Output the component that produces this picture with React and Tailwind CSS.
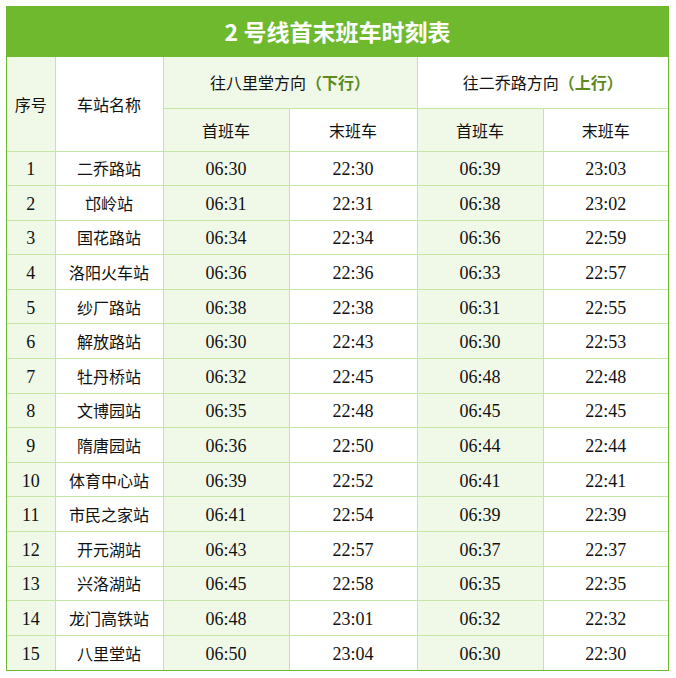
const rows = [
  ['1', '二乔路站', '06:30', '22:30', '06:39', '23:03'],
  ['2', '邙岭站', '06:31', '22:31', '06:38', '23:02'],
  ['3', '国花路站', '06:34', '22:34', '06:36', '22:59'],
  ['4', '洛阳火车站', '06:36', '22:36', '06:33', '22:57'],
  ['5', '纱厂路站', '06:38', '22:38', '06:31', '22:55'],
  ['6', '解放路站', '06:30', '22:43', '06:30', '22:53'],
  ['7', '牡丹桥站', '06:32', '22:45', '06:48', '22:48'],
  ['8', '文博园站', '06:35', '22:48', '06:45', '22:45'],
  ['9', '隋唐园站', '06:36', '22:50', '06:44', '22:44'],
  ['10', '体育中心站', '06:39', '22:52', '06:41', '22:41'],
  ['11', '市民之家站', '06:41', '22:54', '06:39', '22:39'],
  ['12', '开元湖站', '06:43', '22:57', '06:37', '22:37'],
  ['13', '兴洛湖站', '06:45', '22:58', '06:35', '22:35'],
  ['14', '龙门高铁站', '06:48', '23:01', '06:32', '22:32'],
  ['15', '八里堂站', '06:50', '23:04', '06:30', '22:30'],
];

const cjk = "font-['Noto_Sans_CJK_SC',sans-serif] text-[16px]";
const serif = "font-['Liberation_Serif','Noto_Sans_CJK_SC',serif] text-[18px] pt-[3px]";
const cell = 'border border-[#c3e6a4] text-center align-middle p-0';
const shade = 'bg-[#f0f8e8]';

export default function App() {
  return (
    <div className="bg-white w-[676px] h-[678px] pt-[6px] pl-[6px]">
      <div className="w-[663px] border-l border-r border-b border-[#6db82d]">
        <div className={`h-[51px] bg-[#6fb92e] text-white text-[23px] font-bold flex items-center justify-center font-['Noto_Sans_CJK_SC',sans-serif]`}>
          2 号线首末班车时刻表
        </div>
        <table className="table-fixed border-collapse w-[661px] text-[#111]">
          <colgroup>
            <col className="w-[48px]" />
            <col className="w-[108px]" />
            <col className="w-[126px]" />
            <col className="w-[128px]" />
            <col className="w-[126px]" />
            <col className="w-[125px]" />
          </colgroup>
          <thead>
            <tr className="h-[51px]">
              <td rowSpan={2} className={`${cell} ${shade} ${cjk} border-t-0 border-l-0`}>序号</td>
              <td rowSpan={2} className={`${cell} ${cjk} border-t-0`}>车站名称</td>
              <td colSpan={2} className={`${cell} ${shade} ${cjk} border-t-0`}>
                往八里堂方向<span className="text-[#5e8a1c] font-bold">（下行）</span>
              </td>
              <td colSpan={2} className={`${cell} ${cjk} border-t-0 border-r-0`}>
                往二乔路方向<span className="text-[#5e8a1c] font-bold">（上行）</span>
              </td>
            </tr>
            <tr className="h-[43px]">
              <td className={`${cell} ${shade} ${cjk}`}>首班车</td>
              <td className={`${cell} ${cjk}`}>末班车</td>
              <td className={`${cell} ${shade} ${cjk}`}>首班车</td>
              <td className={`${cell} ${cjk} border-r-0`}>末班车</td>
            </tr>
          </thead>
          <tbody>
            {rows.map((r, i) => {
              const last = i === rows.length - 1 ? 'border-b-0' : '';
              return (
                <tr key={r[0]} className="h-[34.6px]">
                  <td className={`${cell} ${shade} ${serif} border-l-0 ${last}`}>{r[0]}</td>
                  <td className={`${cell} ${cjk} ${last}`}>{r[1]}</td>
                  <td className={`${cell} ${shade} ${serif} ${last}`}>{r[2]}</td>
                  <td className={`${cell} ${serif} ${last}`}>{r[3]}</td>
                  <td className={`${cell} ${shade} ${serif} ${last}`}>{r[4]}</td>
                  <td className={`${cell} ${serif} border-r-0 ${last}`}>{r[5]}</td>
                </tr>
              );
            })}
          </tbody>
        </table>
      </div>
    </div>
  );
}
